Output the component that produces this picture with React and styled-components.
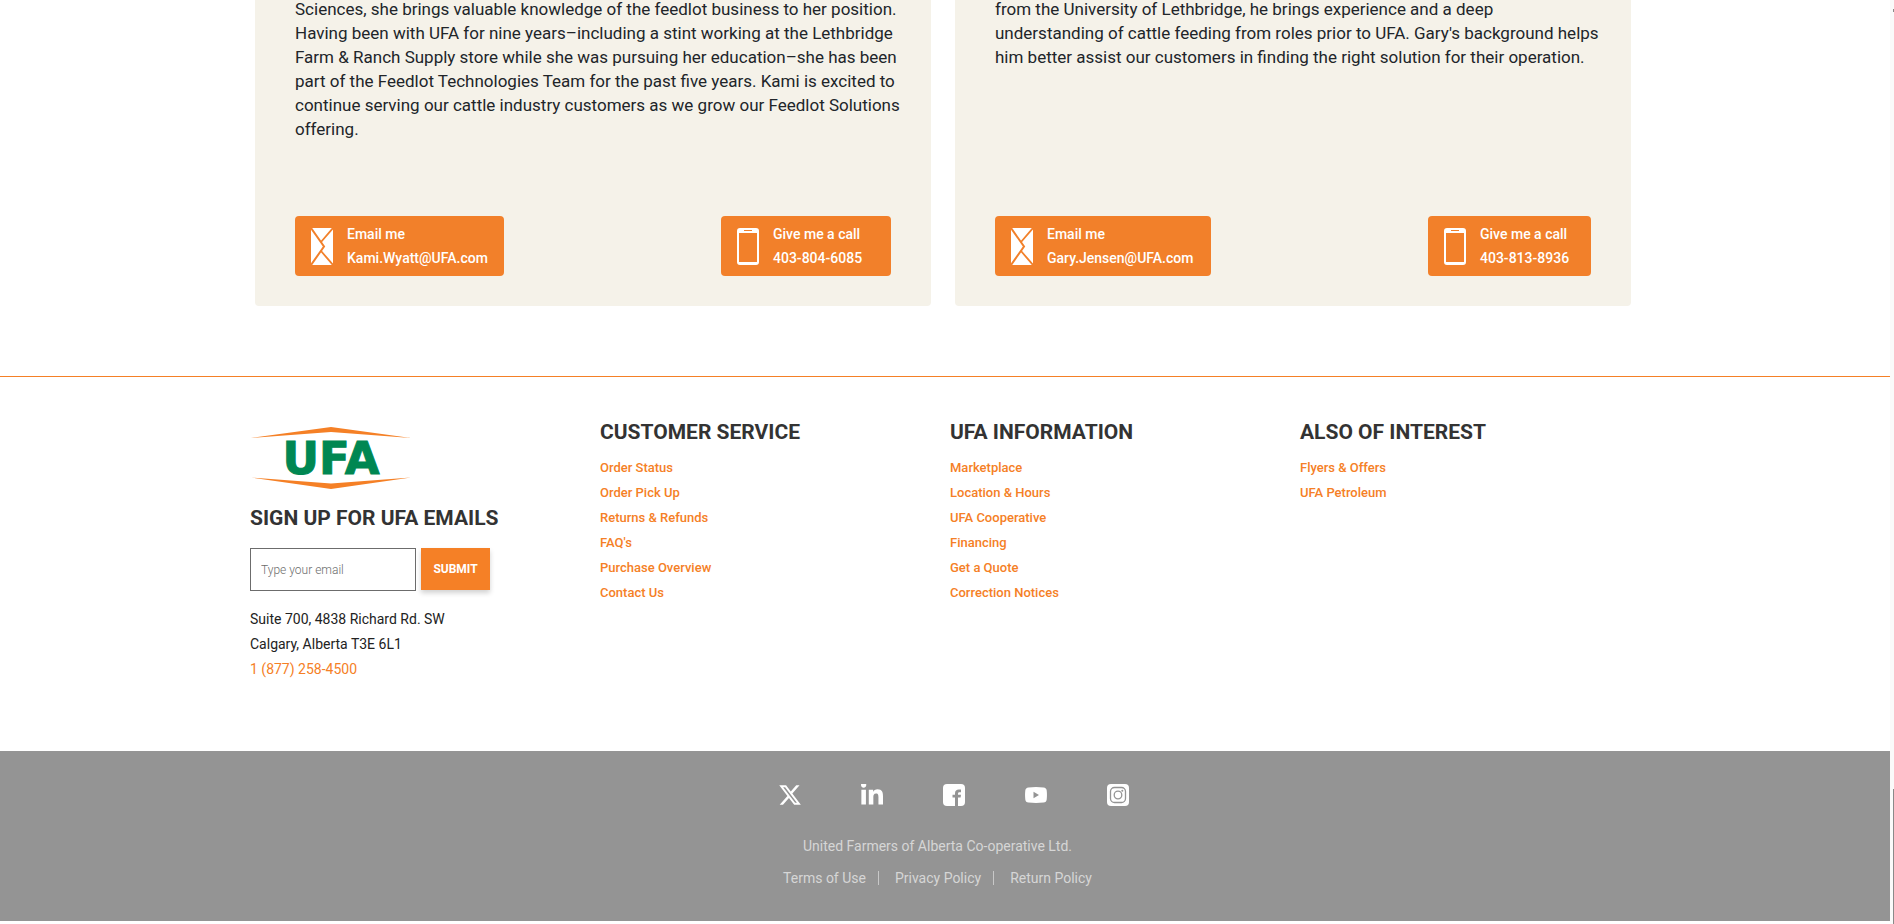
import React from 'react';
import styled, { createGlobalStyle } from 'styled-components';
import { FaLinkedinIn } from 'react-icons/fa6';

const ORANGE = '#f58026';
const GREY = '#949494';

const GlobalStyle = createGlobalStyle`
  *, *::before, *::after { box-sizing: border-box; }
  body {
    margin: 0;
    background: #fff;
    color: #212529;
    font-family: Roboto, "Liberation Sans", sans-serif;
  }
  a { color: inherit; text-decoration: none; }
  ul { list-style: none; margin: 0; padding: 0; }
  p, h2, address { margin: 0; font-style: normal; }
`;

const Page = styled.div`
  display: flex;
  min-height: 100vh;
  overflow: hidden;
`;

const Content = styled.div`
  flex: 1;
  min-width: 0;
`;

const ScrollTrack = styled.div`
  display: flex;
  flex-direction: column;
  justify-content: space-between;
  align-items: flex-end;
  width: 4px;
  padding-top: 9px;
  background: #fafafa;
`;

const ScrollMark = styled.span`
  width: 1px;
  height: ${(p) => p.$height}px;
  background: #8a8a8a;
`;

const Team = styled.main`
  display: grid;
  grid-template-columns: repeat(2, minmax(0, 1fr));
  gap: 24px;
  max-width: 1400px;
  margin: -3px auto 70px;
  padding: 0 14px 0 10px;

  @media (max-width: 1100px) {
    grid-template-columns: minmax(0, 1fr);
  }
`;

const Card = styled.article`
  display: flex;
  flex-direction: column;
  justify-content: space-between;
  gap: 75px;
  padding: 0 40px 30px;
  border-radius: 0 0 4px 4px;
  background: #f5f2e9;
`;

const Bio = styled.p`
  font-size: 17px;
  line-height: 24px;
`;

const BioLine = styled.span`
  display: block;

  @media (min-width: 1400px) {
    white-space: nowrap;
  }
`;

const CardActions = styled.div`
  display: flex;
  flex-wrap: wrap;
  justify-content: space-between;
  gap: 12px;
`;

const ContactButton = styled.a`
  display: flex;
  align-items: center;
  gap: 14px;
  min-width: ${(p) => p.$minWidth}px;
  padding: 6px 15px 6px 16px;
  border-radius: 4px;
  background: #f2802a;
  color: #fff;
  font-size: 14px;
  font-weight: 500;
  line-height: 24px;

  svg { flex: none; }
`;

const ContactLine = styled.span`
  display: block;
`;

const Footer = styled.footer`
  border-top: 1px solid ${ORANGE};
`;

const FooterGrid = styled.div`
  display: grid;
  grid-template-columns: repeat(4, minmax(0, 1fr));
  max-width: 1400px;
  margin: 0 auto;
  padding: 40px 0 69px;

  @media (max-width: 1000px) {
    grid-template-columns: 1fr 1fr;
    row-gap: 32px;
  }
`;

const FooterColumn = styled.section`
  padding-left: 5px;
`;

const FooterHeading = styled.h2`
  color: #333;
  font-size: 21px;
  font-weight: 700;
  line-height: 30px;
  white-space: nowrap;
`;

const FooterLinks = styled.ul`
  margin-top: 8px;
  color: ${ORANGE};
  font-size: 13px;
  font-weight: 500;
  line-height: 25px;
`;

const LogoLink = styled.a`
  display: block;
  margin: 10px 0 14px;

  svg { display: block; }
`;

const SignUpForm = styled.form`
  display: flex;
  align-items: flex-start;
  gap: 5px;
  margin-top: 15px;
`;

const EmailInput = styled.input`
  width: 166px;
  height: 43px;
  padding: 0 10px;
  border: 1px solid #6c6c6c;
  border-radius: 0;
  background: #fff;
  color: #333;
  font-family: inherit;
  font-size: 12px;
  font-weight: 300;

  &::placeholder { color: #6c6c6c; opacity: 1; }
`;

const SubmitButton = styled.button`
  width: 69px;
  height: 42px;
  padding: 0;
  border: 0;
  background: ${ORANGE};
  box-shadow: 0 3px 5px rgba(0, 0, 0, 0.18);
  color: #fff;
  font-family: inherit;
  font-size: 12px;
  font-weight: 700;
`;

const Address = styled.address`
  margin-top: 16px;
  color: #222;
  font-size: 14px;
  font-weight: 400;
  line-height: 25px;
`;

const PhoneLink = styled.a`
  display: block;
  color: ${ORANGE};
  font-size: 14px;
  line-height: 25px;
`;

const BottomBar = styled.div`
  display: flex;
  flex-direction: column;
  align-items: center;
  padding: 33px 0;
  background: ${GREY};
  color: #d6d6d6;
  font-size: 14px;
  line-height: 20px;
`;

const SocialLinks = styled.ul`
  display: flex;
  gap: 60px;
  padding-left: 18px;
  color: #fff;

  svg { display: block; }
`;

const Copyright = styled.p`
  margin-top: 30px;
  padding-right: 15px;
`;

const LegalLinks = styled.ul`
  display: flex;
  margin-top: 12px;
  padding-right: 15px;
`;

const LegalItem = styled.li`
  display: flex;
  align-items: center;

  & + &::before {
    content: "";
    width: 1px;
    height: 14px;
    margin: 0 16px 0 12px;
    background: #c8c8c8;
  }
`;

const EnvelopeIcon = () => (
  <svg width="22" height="37" viewBox="0 0 22 37" aria-hidden="true">
    <rect width="22" height="37" fill="#fff" />
    <g fill="none" stroke="#f2802a" strokeWidth="1.8">
      <path d="M0 0 13 18.5 0 37" strokeWidth="2" />
      <path d="M22 0 10 14M22 37 10 23" />
    </g>
  </svg>
);

const PhoneIcon = () => (
  <svg width="22" height="37" viewBox="0 0 22 37" aria-hidden="true">
    <path
      fill="#fff"
      fillRule="evenodd"
      d="M3 0h16a3 3 0 0 1 3 3v31a3 3 0 0 1-3 3H3a3 3 0 0 1-3-3V3a3 3 0 0 1 3-3ZM2 5v29h18V5ZM7 2v1h8V2Z"
    />
  </svg>
);

const UfaLogo = () => (
  <svg width="162" height="62" viewBox="0 0 162 62" role="img" aria-label="UFA">
    <g fill={ORANGE}>
      <path d="M1 11 81 0l80 11-80-6Z" />
      <path d="M1 50.5 81 62l80-11.5L81 56.5Z" />
    </g>
    <text
      x="81"
      y="47"
      textAnchor="middle"
      fontFamily='"DejaVu Sans", sans-serif'
      fontWeight="700"
      fontSize="45"
      fill="#008752"
      stroke="#008752"
      strokeWidth="1"
    >
      UFA
    </text>
  </svg>
);

const XIcon = () => (
  <svg width="22" height="22" viewBox="1 1.5 22 21" fill="currentColor" aria-hidden="true">
    <path d="M18.244 2.25h3.308l-7.227 8.26 8.502 11.24H16.17l-5.214-6.817L4.99 21.75H1.68l7.73-8.835L1.254 2.25H8.08l4.713 6.231zm-1.161 17.52h1.833L7.084 4.126H5.117z" />
  </svg>
);

const LinkedInIcon = () => <FaLinkedinIn size={22} viewBox="0 32 448 448" />;

const FacebookIcon = () => (
  <svg width="22" height="22" viewBox="0 0 22 22" aria-hidden="true">
    <rect width="22" height="22" rx="4" fill="#fff" />
    <path
      d="M12 22v-8.500H9.500v-2.800H12V9.300C12 6.700 13.600 5.500 15.800 5.500H18v2.700h-1.500C15.400 8.200 15 8.800 15 9.700v1H18l-.4 2.800H15V22Z"
      fill={GREY}
    />
  </svg>
);

const YouTubeIcon = () => (
  <svg width="22" height="22" viewBox="0 0 22 22" aria-hidden="true">
    <path
      d="M3.500 3.400Q11 2.600 18.500 3.400Q21.400 3.700 21.700 6.500Q22.200 11 21.700 15.500Q21.400 18.300 18.500 18.600Q11 19.300 3.500 18.600Q.6 18.300.3 15.500Q-.2 11 .3 6.500Q.6 3.700 3.500 3.400Z"
      fill="#fff"
    />
    <path d="M8.500 7.800v6.400L14 11Z" fill={GREY} />
  </svg>
);

const InstagramIcon = () => (
  <svg width="22" height="22" viewBox="0 0 22 22" aria-hidden="true">
    <rect width="22" height="22" rx="4" fill="#fff" />
    <g fill="none" stroke={GREY} strokeWidth="1.300">
      <rect x="3.500" y="3.500" width="15" height="15" rx="4" />
      <circle cx="11" cy="11" r="3.800" />
    </g>
    <circle cx="15.300" cy="6.700" r="1" fill={GREY} />
  </svg>
);

const people = [
  {
    id: 'kami',
    bio: [
      'Sciences, she brings valuable knowledge of the feedlot business to her position.',
      'Having been with UFA for nine years–including a stint working at the Lethbridge',
      'Farm & Ranch Supply store while she was pursuing her education–she has been',
      'part of the Feedlot Technologies Team for the past five years. Kami is excited to',
      'continue serving our cattle industry customers as we grow our Feedlot Solutions',
      'offering.',
    ],
    email: 'Kami.Wyatt@UFA.com',
    emailWidth: 209,
    phone: '403-804-6085',
    phoneWidth: 170,
  },
  {
    id: 'gary',
    bio: [
      'from the University of Lethbridge, he brings experience and a deep',
      "understanding of cattle feeding from roles prior to UFA. Gary's background helps",
      'him better assist our customers in finding the right solution for their operation.',
    ],
    email: 'Gary.Jensen@UFA.com',
    emailWidth: 216,
    phone: '403-813-8936',
    phoneWidth: 163,
  },
];

const linkColumns = [
  {
    title: 'CUSTOMER SERVICE',
    links: ['Order Status', 'Order Pick Up', 'Returns & Refunds', "FAQ's", 'Purchase Overview', 'Contact Us'],
  },
  {
    title: 'UFA INFORMATION',
    links: ['Marketplace', 'Location & Hours', 'UFA Cooperative', 'Financing', 'Get a Quote', 'Correction Notices'],
  },
  { title: 'ALSO OF INTEREST', links: ['Flyers & Offers', 'UFA Petroleum'] },
];

const socials = [
  { name: 'X', Icon: XIcon },
  { name: 'LinkedIn', Icon: LinkedInIcon },
  { name: 'Facebook', Icon: FacebookIcon },
  { name: 'YouTube', Icon: YouTubeIcon },
  { name: 'Instagram', Icon: InstagramIcon },
];

function PersonCard({ person }) {
  return (
    <Card>
      <Bio>
        {person.bio.map((line) => (
          <BioLine key={line}>{line}</BioLine>
        ))}
      </Bio>
      <CardActions>
        <ContactButton href={`mailto:${person.email}`} $minWidth={person.emailWidth}>
          <EnvelopeIcon />
          <span>
            <ContactLine>Email me</ContactLine>
            <ContactLine>{person.email}</ContactLine>
          </span>
        </ContactButton>
        <ContactButton href={`tel:${person.phone}`} $minWidth={person.phoneWidth}>
          <PhoneIcon />
          <span>
            <ContactLine>Give me a call</ContactLine>
            <ContactLine>{person.phone}</ContactLine>
          </span>
        </ContactButton>
      </CardActions>
    </Card>
  );
}

export default function App() {
  return (
    <Page>
      <GlobalStyle />
      <Content>
        <Team>
          {people.map((person) => (
            <PersonCard key={person.id} person={person} />
          ))}
        </Team>
        <Footer>
          <FooterGrid>
            <FooterColumn>
              <LogoLink href="#home">
                <UfaLogo />
              </LogoLink>
              <FooterHeading>SIGN UP FOR UFA EMAILS</FooterHeading>
              <SignUpForm onSubmit={(e) => e.preventDefault()}>
                <EmailInput type="email" aria-label="Email address" placeholder="Type your email" />
                <SubmitButton type="submit">SUBMIT</SubmitButton>
              </SignUpForm>
              <Address>
                <div>Suite 700, 4838 Richard Rd. SW</div>
                <div>Calgary, Alberta T3E 6L1</div>
                <PhoneLink href="tel:18772584500">1 (877) 258-4500</PhoneLink>
              </Address>
            </FooterColumn>
            {linkColumns.map((column) => (
              <FooterColumn key={column.title}>
                <FooterHeading>{column.title}</FooterHeading>
                <FooterLinks>
                  {column.links.map((label) => (
                    <li key={label}>
                      <a href="#footer">{label}</a>
                    </li>
                  ))}
                </FooterLinks>
              </FooterColumn>
            ))}
          </FooterGrid>
          <BottomBar>
            <SocialLinks>
              {socials.map(({ name, Icon }) => (
                <li key={name}>
                  <a href="#social" aria-label={name}>
                    <Icon />
                  </a>
                </li>
              ))}
            </SocialLinks>
            <Copyright>United Farmers of Alberta Co-operative Ltd.</Copyright>
            <LegalLinks>
              {['Terms of Use', 'Privacy Policy', 'Return Policy'].map((label) => (
                <LegalItem key={label}>
                  <a href="#legal">{label}</a>
                </LegalItem>
              ))}
            </LegalLinks>
          </BottomBar>
        </Footer>
      </Content>
      <ScrollTrack aria-hidden="true">
        <ScrollMark $height={3} />
        <ScrollMark $height={135} />
      </ScrollTrack>
    </Page>
  );
}
